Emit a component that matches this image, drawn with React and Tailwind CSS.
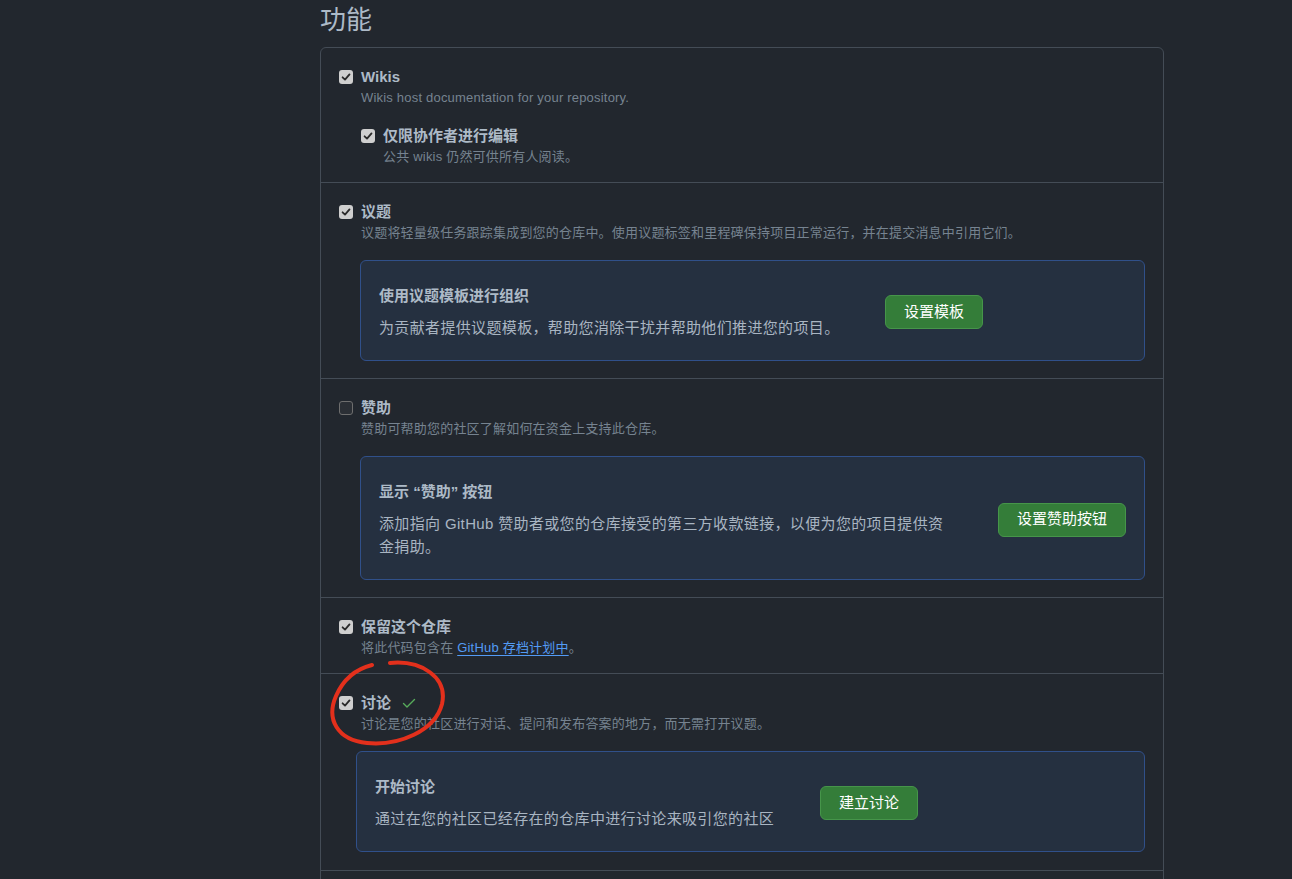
import React from "react";

const FONT = { fontFamily: '"Liberation Sans", "Noto Sans CJK SC", sans-serif' };

function Check({ checked }) {
  if (checked) {
    return (
      <span className="flex h-[14px] w-[14px] shrink-0 items-center justify-center rounded-[3px] bg-[#cfcfcf]">
        <svg width="10" height="10" viewBox="0 0 10 10" fill="none">
          <path d="M1.6 5.3 L4 7.6 L8.5 2.4" stroke="#2a2a2a" strokeWidth="1.8" strokeLinecap="round" strokeLinejoin="round" />
        </svg>
      </span>
    );
  }
  return <span className="h-[14px] w-[14px] shrink-0 rounded-[3px] border-[1.5px] border-[#6e6e6e] bg-[#2b2f35]" />;
}

function Label({ checked, children, extra }) {
  return (
    <div className="flex items-center gap-[8px]">
      <Check checked={checked} />
      <span className="text-[15px] font-bold leading-[22px] text-[#adbac7]">{children}</span>
      {extra}
    </div>
  );
}

function Desc({ children }) {
  return <div className="pl-[22px] text-[13px] leading-[20px] tracking-[0.2px] text-[#768390]">{children}</div>;
}

function Button({ children }) {
  return (
    <button className="h-[34px] shrink-0 rounded-[6px] border border-[#46954a] bg-[#347d39] px-[18px] text-[15px] font-normal text-white">
      {children}
    </button>
  );
}

function InnerBox({ title, desc, btn, textW, className }) {
  return (
    <div className={"flex items-center rounded-[6px] border border-[#30508a] bg-[#253040] pl-[18px] pr-[18px] pt-[24px] pb-[21px] " + className}>
      <div className="shrink-0" style={{ width: textW }}>
        <div className="text-[15px] font-bold leading-[22px] text-[#adbac7]">{title}</div>
        <div className="mt-[9px] text-[15px] leading-[23px] tracking-[0.35px] text-[#a9b5c2]">{desc}</div>
      </div>
      <Button>{btn}</Button>
    </div>
  );
}

export default function App() {
  return (
    <div className="h-[879px] w-full overflow-hidden bg-[#22272e]" style={FONT}>
      <div className="ml-[320px] w-[844px]">
        <h2 className="pt-[4px] text-[26px] font-normal leading-[32px] text-[#adbac7]">功能</h2>
        <div className="relative mt-[11px] rounded-[6px] border border-[#444c56]">
          {/* Wikis */}
          <div className="px-[18px] pt-[18px] pb-[15px]">
            <Label checked>Wikis</Label>
            <Desc>Wikis host documentation for your repository.</Desc>
            <div className="mt-[17px] pl-[22px]">
              <Label checked>仅限协作者进行编辑</Label>
              <Desc>公共 wikis 仍然可供所有人阅读。</Desc>
            </div>
          </div>
          {/* Issues */}
          <div className="border-t border-[#444c56] px-[18px] pt-[18px] pb-[17px]">
            <Label checked>议题</Label>
            <Desc>议题将轻量级任务跟踪集成到您的仓库中。使用议题标签和里程碑保持项目正常运行，并在提交消息中引用它们。</Desc>
            <InnerBox
              className="mt-[17px] ml-[21px]"
              textW="506px"
              title="使用议题模板进行组织"
              desc="为贡献者提供议题模板，帮助您消除干扰并帮助他们推进您的项目。"
              btn="设置模板"
            />
          </div>
          {/* Sponsorships */}
          <div className="border-t border-[#444c56] px-[18px] pt-[18px] pb-[17px]">
            <Label checked={false}>赞助</Label>
            <Desc>赞助可帮助您的社区了解如何在资金上支持此仓库。</Desc>
            <InnerBox
              className="mt-[17px] ml-[21px]"
              textW="619px"
              title="显示 “赞助” 按钮"
              desc={<>添加指向 GitHub 赞助者或您的仓库接受的第三方收款链接，以便为您的项目提供资<br />金捐助。</>}
              btn="设置赞助按钮"
            />
          </div>
          {/* Archive */}
          <div className="border-t border-[#444c56] px-[18px] pt-[18px] pb-[15px]">
            <Label checked>保留这个仓库</Label>
            <Desc>
              将此代码包含在{" "}
              <a className="text-[#539bf5] underline underline-offset-[3px]">GitHub 存档计划中</a>。
            </Desc>
          </div>
          {/* Discussions */}
          <div className="relative border-t border-[#444c56] px-[18px] pt-[18px] pb-[18px]">
            <Label
              checked
              extra={
                <svg className="ml-[2px]" width="16" height="16" viewBox="0 0 16 16" fill="none">
                  <path d="M2.5 8.5 L6 12 L13.5 4.5" stroke="#57ab5a" strokeWidth="1.4" strokeLinecap="round" strokeLinejoin="round" />
                </svg>
              }
            >
              讨论
            </Label>
            <Desc>讨论是您的社区进行对话、提问和发布答案的地方，而无需打开议题。</Desc>
            <InnerBox
              className="mt-[17px] ml-[17px]"
              textW="445px"
              title="开始讨论"
              desc="通过在您的社区已经存在的仓库中进行讨论来吸引您的社区"
              btn="建立讨论"
            />
            <svg
              className="pointer-events-none absolute left-[6px] top-[-14px]"
              width="130"
              height="90"
              viewBox="326 659 130 90"
              fill="none"
            >
              <path
                d="M389 662 C420 659 447 676 441 703 C434 730 398 745 366 742 C336 739 325 718 335 695 C342 679 355 668 371 664"
                stroke="#e3301c"
                strokeWidth="4"
                strokeLinecap="round"
              />
            </svg>
          </div>
          {/* Next section (below the fold) */}
          <div className="h-[60px] border-t border-[#444c56]" />
        </div>
      </div>
    </div>
  );
}
